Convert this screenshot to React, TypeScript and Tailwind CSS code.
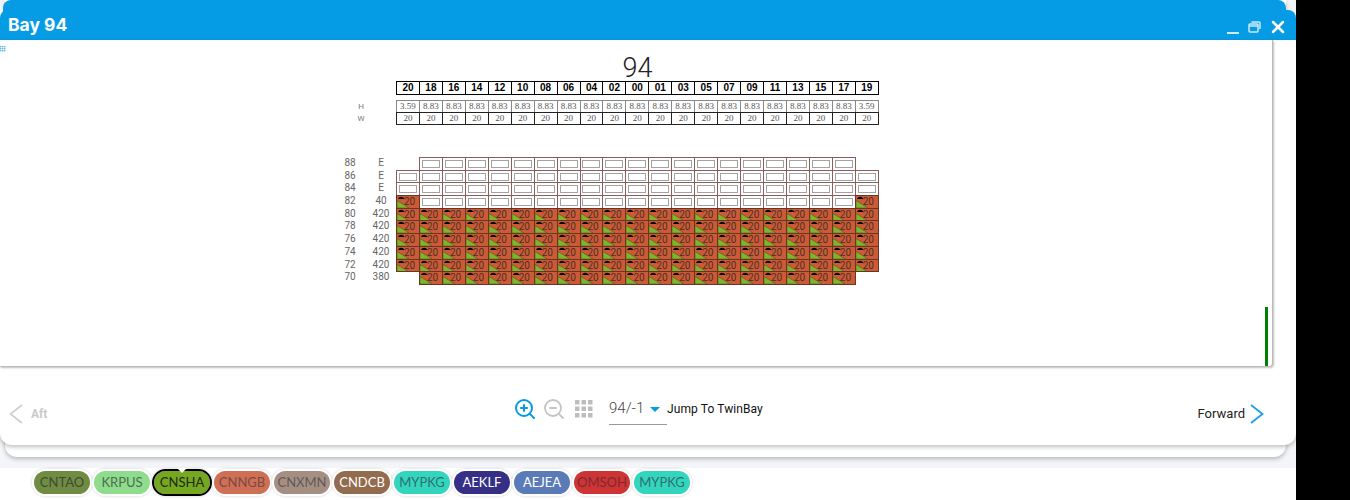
import { ZoomIn, ZoomOut, X } from 'lucide-react'

const bays = ['20', '18', '16', '14', '12', '10', '08', '06', '04', '02', '00', '01', '03', '05', '07', '09', '11', '13', '15', '17', '19']
const heights = ['3.59', ...Array(19).fill('8.83'), '3.59']

const tiers = [
  { tier: '88', count: 'E', kind: 'empty', narrow: true },
  { tier: '86', count: 'E', kind: 'empty', narrow: false },
  { tier: '84', count: 'E', kind: 'empty', narrow: false },
  { tier: '82', count: '40', kind: 'mixed', narrow: false },
  { tier: '80', count: '420', kind: 'full', narrow: false },
  { tier: '78', count: '420', kind: 'full', narrow: false },
  { tier: '76', count: '420', kind: 'full', narrow: false },
  { tier: '74', count: '420', kind: 'full', narrow: false },
  { tier: '72', count: '420', kind: 'full', narrow: false },
  { tier: '70', count: '380', kind: 'full', narrow: true },
]

const ports = [
  { name: 'CNTAO', cls: 'bg-[#6f8c42] text-[#3f4a35]' },
  { name: 'KRPUS', cls: 'bg-[#8fdc8c] text-[#4b6f55]' },
  { name: 'CNSHA', cls: 'bg-[#75a820] text-[#1d2a10] outline-2 outline-black outline-offset-0' },
  { name: 'CNNGB', cls: 'bg-[#cf6f55] text-[#7a4a44]' },
  { name: 'CNXMN', cls: 'bg-[#a58f82] text-[#5f5a5a]' },
  { name: 'CNDCB', cls: 'bg-[#936b4e] text-white' },
  { name: 'MYPKG', cls: 'bg-[#33d6bd] text-[#2f6f70]' },
  { name: 'AEKLF', cls: 'bg-[#352f86] text-white' },
  { name: 'AEJEA', cls: 'bg-[#5b7bb8] text-white' },
  { name: 'OMSOH', cls: 'bg-[#cf3434] text-[#7a2a30]' },
  { name: 'MYPKG', cls: 'bg-[#33d6bd] text-[#2f6f70]' },
]

function FullCell() {
  return (
    <div className="relative w-[23.95px] h-[13.7px] -mr-px -mb-px bg-[#cd5a36] border border-[#6b3524] overflow-hidden">
      <svg className="absolute left-0 top-0" width="22" height="12" viewBox="0 0 22 12">
        <path d="M0 4.5 L12 12 L0 12 Z" fill="#7fb52c" stroke="#4a4a18" strokeWidth="0.5" />
        <path d="M1 3 C2 0 6 0 7.5 3 Z" fill="#000" />
      </svg>
      <span className="absolute left-[7px] top-0 text-[10px] leading-[12px] text-[#4a3026] font-['Roboto',sans-serif]">20</span>
    </div>
  )
}

function EmptyCell() {
  return (
    <div className="flex items-center justify-center w-[23.95px] h-[13.7px] -mr-px -mb-px bg-white border border-[#8a5f5a]">
      <div className="w-[18px] h-[8px] border border-[#a3a3a3]" />
    </div>
  )
}

function TierRow({ tier, count, kind, narrow }: { tier: string; count: string; kind: string; narrow: boolean }) {
  return (
    <div className="flex h-[12.7px] items-start">
      <span className="w-[32px] text-center text-[10px] leading-[12px] text-[#666] font-['Roboto',sans-serif]">{tier}</span>
      <span className="w-[30px] text-center text-[10px] leading-[12px] text-[#666] font-['Roboto',sans-serif]">{count}</span>
      {bays.map((b, i) => {
        const edge = i === 0 || i === bays.length - 1
        if (narrow && edge) return <div key={b} className="w-[22.95px]" />
        if (kind === 'full' || (kind === 'mixed' && edge)) return <FullCell key={b} />
        return <EmptyCell key={b} />
      })}
    </div>
  )
}

function BayPlan() {
  return (
    <div className="w-[545px] ml-[334px] font-['Liberation_Sans',sans-serif]">
      <div className="h-[26px] pl-[62px] text-center text-[27px] leading-[26px] text-[#222] font-['Roboto',sans-serif] font-light">94</div>
      <div className="flex pl-[62px]">
        {bays.map((b) => (
          <div key={b} className="w-[23.95px] h-[14px] -mr-px border border-black text-center text-[10px] leading-[11px] font-bold text-black">{b}</div>
        ))}
      </div>
      <div className="flex mt-[5px] items-center">
        <span className="w-[54px] mr-[8px] text-center text-[8px] text-[#777] font-['Roboto',sans-serif]">H</span>
        {heights.map((h, i) => (
          <div key={i} className="w-[23.95px] h-[13px] -mr-px border border-[#888] text-center text-[9px] leading-[11px] text-[#555] font-['Liberation_Serif',serif]">{h}</div>
        ))}
      </div>
      <div className="flex -mt-px items-center">
        <span className="w-[54px] mr-[8px] text-center text-[8px] text-[#777] font-['Roboto',sans-serif]">W</span>
        {bays.map((b) => (
          <div key={b} className="w-[23.95px] h-[13px] -mr-px border border-[#222] text-center text-[9px] leading-[11px] text-[#555] font-['Liberation_Serif',serif]">20</div>
        ))}
      </div>
      <div className="mt-[32px]">
        {tiers.map((t) => (
          <TierRow key={t.tier} {...t} />
        ))}
      </div>
    </div>
  )
}

function GridIcon({ size = 18 }: { size?: number }) {
  return (
    <svg width={size} height={size} viewBox="0 0 18 18" fill="#bdbdbd">
      {[0, 6.5, 13].map((y) => [0, 6.5, 13].map((x) => <rect key={`${x}-${y}`} x={x} y={y} width="4.5" height="4.5" />))}
    </svg>
  )
}

export default function App() {
  return (
    <div className="flex w-[1350px] h-[500px] overflow-hidden bg-black">
      <div className="flex flex-col w-[1296px] h-full bg-[#f3f5f8]">
        <div className="relative flex flex-col h-[457px] shrink-0 pt-[10px]">
          {/* stacked card behind the modal */}
          <div className="absolute left-[5px] right-[10px] top-0 bottom-0 rounded-b-xl bg-white shadow-[0_2px_4px_rgba(0,0,0,0.25)]" />
          <div className="absolute left-[3px] right-[10px] top-0 h-[14px] rounded-t-lg bg-[#069ce5]" />

          <div className="relative flex flex-col h-[435px]">
            <header className="flex items-end justify-between h-[30px] pl-[8px] pr-[8px] pb-[3px] rounded-t-lg bg-[#069ce5] text-white">
              <h2 className="text-[17.5px] leading-[24px] font-bold font-['Inter',sans-serif]">Bay 94</h2>
              <div className="flex items-center h-[20px]">
                <span className="mt-[11px] w-[12px] h-[2px] bg-[#cdeafa]" />
                <svg className="ml-[9px]" width="13" height="12" viewBox="0 0 13 12" fill="none" stroke="#cdeafa" strokeWidth="1.5">
                  <rect x="1" y="3" width="9" height="8" rx="1" />
                  <path d="M3.5 1 H11 a1 1 0 0 1 1 1 V8" />
                  <path d="M1 5 H10" />
                </svg>
                <X className="ml-[7px] w-[20px] h-[20px]" strokeWidth={3} />
              </div>
            </header>

            <div className="flex flex-col flex-1 rounded-b-xl bg-white shadow-[0_2px_4px_rgba(0,0,0,0.25)]">
              <div className="relative w-[1273px] h-[327px] shrink-0 rounded-br bg-white border-r border-b border-[#bbb] shadow-[1px_1px_2px_rgba(0,0,0,0.25)] pt-[15px]">
                <svg className="absolute left-0 top-[6px]" width="6" height="6" viewBox="0 0 6 6" fill="#5fb7ea">
                  {[0, 2, 4].map((y) => [0, 2, 4].map((x) => <rect key={`${x}-${y}`} x={x} y={y} width="1.4" height="1.4" />))}
                </svg>
                <BayPlan />
                <div className="absolute right-[4px] bottom-0 w-[3px] h-[59px] bg-[#008000]" />
              </div>

              <nav className="flex flex-1 items-center justify-between pl-[9px] pr-[32px] pt-[15px]">
                <div className="flex items-center gap-[8px] w-[200px]">
                  <svg width="14" height="20" viewBox="0 0 14 20" fill="none" stroke="#cfcfcf" strokeWidth="1.7">
                    <path d="M13 1 L1.5 10 L13 19" />
                  </svg>
                  <span className="text-[12px] font-bold text-[#c9c9c9] font-['Roboto',sans-serif]">Aft</span>
                </div>
                <div className="flex items-center ml-[2px] mb-[9px] font-['Roboto',sans-serif]">
                  <ZoomIn className="w-[24px] h-[24px] text-[#069ce5]" strokeWidth={2} />
                  <ZoomOut className="ml-[5px] w-[24px] h-[24px] text-[#c4c4c4]" strokeWidth={1.8} />
                  <span className="ml-[9px]"><GridIcon /></span>
                  <div className="flex items-center justify-between w-[58px] h-[31px] ml-[16px] mt-[1px] pr-[7px] border-b border-[#999] pb-[3px]">
                    <span className="text-[15px] leading-[20px] font-light text-[#444]">94/-1</span>
                    <span className="mt-[3px] border-x-[5px] border-t-[5px] border-x-transparent border-t-[#069ce5]" />
                  </div>
                  <span className="w-[95px] text-[12px] text-[#111] whitespace-nowrap tracking-[0.1px]">Jump To TwinBay</span>
                </div>
                <div className="flex items-center justify-end gap-[5px] w-[200px]">
                  <span className="text-[13px] text-[#222] font-['Roboto',sans-serif]">Forward</span>
                  <svg width="14" height="20" viewBox="0 0 14 20" fill="none" stroke="#1a9fe8" strokeWidth="1.8">
                    <path d="M1 1 L12.5 10 L1 19" />
                  </svg>
                </div>
              </nav>
            </div>
          </div>
        </div>

        <div className="h-[11px] shrink-0" />
        <div className="flex flex-1 items-start pl-[32px] pt-[1px] bg-white font-['Lato',sans-serif]">
          {ports.map((p, i) => (
            <div key={i} className="relative shadow-[0_0_3px_rgba(0,0,0,0.2)] rounded-full border-2 border-white">
              {p.name === 'CNSHA' && (
                <span className="absolute left-1/2 -translate-x-1/2 -top-[3px] border-x-[5px] border-t-[5px] border-x-transparent border-t-white z-10" />
              )}
              <div className={`flex items-center justify-center w-[56px] h-[23px] rounded-full text-[13px] ${p.cls}`}>{p.name}</div>
            </div>
          ))}
        </div>
      </div>
    </div>
  )
}
